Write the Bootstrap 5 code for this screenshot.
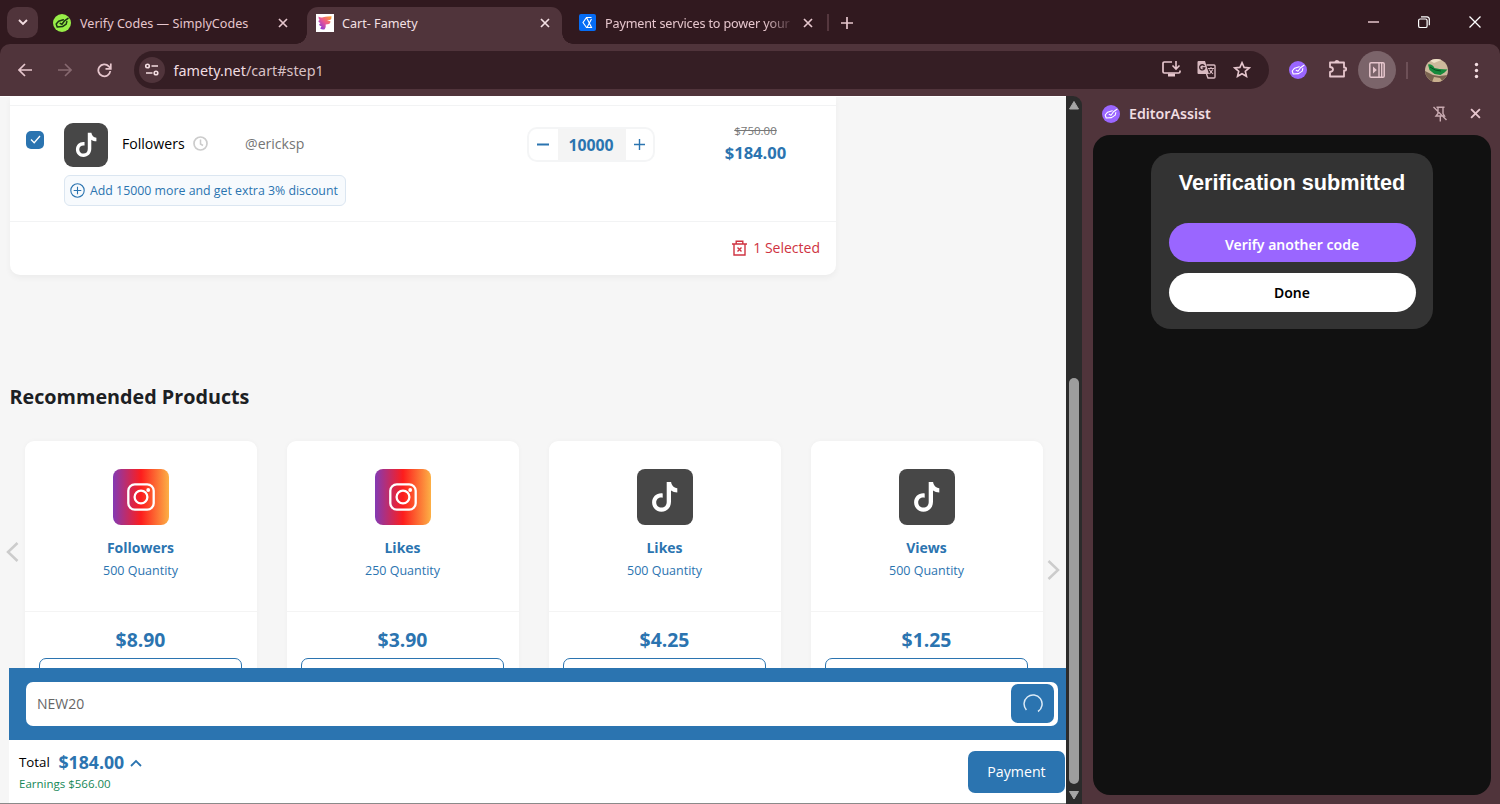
<!DOCTYPE html>
<html lang="en">
<head>
<meta charset="utf-8">
<meta name="viewport" content="width=device-width, initial-scale=1">
<title>Cart- Famety</title>
<link href="https://cdn.jsdelivr.net/npm/bootstrap@5.3.0/dist/css/bootstrap.min.css" rel="stylesheet">
<style>
:root{--strip:#31191f;--bar:#50343b;--pill:#351e24;--ink:#e6c6cd;--blue:#2b74b0;--page:#f6f6f6;}
html,body{height:100%;overflow:hidden}
body{background:var(--bar);font-family:"Open Sans","Noto Sans",sans-serif;font-size:14px;color:#111}
svg{display:block;flex:none}
.t{white-space:nowrap;display:block;flex:none}
.window{width:1500px;height:804px}
.strip{height:44px;background:var(--strip);color:var(--ink);font-family:"Noto Sans","Open Sans",sans-serif;font-size:12.6px}
.chevbox{width:31px;height:31px;border-radius:10px;background:var(--bar);margin:7px 0 0 7px}
.tab1{width:269px;padding:0 19px 0 15px}
.tab2{width:255px;height:37px;margin-top:7px;padding:0 12px 6px 9px;background:var(--bar);border-radius:11px 11px 0 0;color:#f3e0e4;position:relative}
.tab2::before,.tab2::after{content:"";position:absolute;bottom:0;width:11px;height:11px}
.tab2::before{left:-11px;background:radial-gradient(circle at 0 0,transparent 10.5px,var(--bar) 11px)}
.tab2::after{right:-11px;background:radial-gradient(circle at 100% 0,transparent 10.5px,var(--bar) 11px)}
.tab3{width:256px;padding:0 5px 0 17px}
.fade-end{width:187px;letter-spacing:-.15px;-webkit-mask-image:linear-gradient(90deg,#000 160px,transparent 190px);mask-image:linear-gradient(90deg,#000 160px,transparent 190px)}
.tabtxt{height:30px;line-height:30px;margin-top:1px}
.vline{width:2px;height:17px;background:#55373e}
.toolbar{height:52px;background:var(--strip)}
.toolbar-in{height:52px;background:var(--bar);border-radius:10px 10px 0 0;color:var(--ink)}
.omni{width:1135px;height:38px;border-radius:19px;background:var(--pill);padding:0 18px 0 5px;margin-top:-1px}
.site{width:26px;height:26px;border-radius:50%;background:var(--bar)}
.url{font-size:14.35px;color:#f0dde1;font-family:"Noto Sans","Open Sans",sans-serif}
.panelbtn{width:38px;height:38px;border-radius:50%;background:#7b646a}
.site-page{width:1066px;height:708px;background:var(--page);border-top:1px solid #fff;border-bottom:1px solid #8a8a8a}
.cart{width:826px;height:178px;margin-left:10px;background:#fff;border-radius:0 0 10px 10px;box-shadow:0 3px 6px rgba(0,0,0,.045)}
.cart-top{height:9px;border-bottom:1px solid #f2f3f4}
.cart-item{height:116px;border-bottom:1px solid #f2f3f4}
.cart-item>*{flex:none}
.check{width:18px;height:18px;border-radius:5px;background:var(--blue);margin:24.5px 0 0 16px}
.tk{background:#474747}
.tk44{width:44px;height:44px;border-radius:9px}
.offer{width:282px;height:31px;border:1px solid #dbe6f1;border-radius:6px;background:#f7fafd;color:var(--blue);font-size:12.35px;padding-left:5px;margin-top:8px}
.qty{width:128px;height:35px;border:2px solid #f4f5f6;border-radius:10px;color:var(--blue);overflow:hidden}
.qtynum{width:68px;background:#f4f4f4;font-weight:700;font-size:15.8px;line-height:32px;text-align:center;padding-right:2px}
.blue{color:var(--blue)}
.del{color:#cf3341}
.heading{height:28px;line-height:28px;font-size:19.75px;font-weight:700;color:#1c2023;margin:108px 0 30px 9.5px}
.prods{display:grid;grid-template-columns:repeat(4,232px);column-gap:30px}
.prod{height:240px;background:#fff;border-radius:9px;box-shadow:0 0 5px rgba(0,0,0,.03);color:var(--blue);text-align:center}
.prod-top{height:171px;padding-top:28px;border-bottom:1px solid #f4f4f4}
.pic{width:56px;height:56px;border-radius:8px}
.ig{background:linear-gradient(90deg,#833ab4,#fd1d1d 50%,#fcb045)}
.pname{font-weight:700;font-size:14px;line-height:20px;margin-top:13px}
.pqty{font-size:12.5px;line-height:18px;margin-top:4px}
.price{font-weight:700;font-size:19.4px;line-height:26px;padding-top:15px;height:46px}
.buy{height:38px;margin:0 14.5px;border:1px solid var(--blue);border-radius:7px}
.coupon{height:72px;background:var(--blue);padding:14px 8px 14px 16px}
.coupon-in{height:44px;background:#fff;border-radius:7px;padding:0 4px 1px 11px;color:#666;font-size:14px}
.spin{width:43px;height:39px;border-radius:7px;background:var(--blue)}
.totals{height:63px;background:#fff;padding-left:10px}
.paybtn{width:97px;height:42px;border-radius:7px;background:var(--blue);color:#fff;font-size:14.2px;line-height:42px;text-align:center;margin:11px 1px 0 0}
.sbar{width:16px;height:708px;background:#2b2b2b;border-radius:0 9px 0 0}
.thumb{width:10px;height:406px;border-radius:5px;background:#9d9d9d}
.side{width:418px;height:708px;padding:0 9px 0 11px}
.side-head{height:39px;color:var(--ink);padding:0 10px 4px 9px}
.side-title{font-family:"Noto Sans","Open Sans",sans-serif;font-weight:600;font-size:14.2px;color:#f0dde1}
.side-body{height:660px;border-radius:17px;background:#111;padding-top:18px}
.verify{width:282px;height:176px;border-radius:20px;background:#333;padding:16px 17.5px 0}
.verify-title{font-family:"Liberation Sans",Arial,sans-serif;font-weight:700;font-size:21.7px;line-height:28px;color:#fff;height:54px}
.vbtn{height:39px;border-radius:20px;line-height:41px;text-align:center;font-family:"Noto Sans","Open Sans",sans-serif;font-weight:600;font-size:14px}
</style>
</head>
<body>
<svg width="0" height="0" class="position-absolute">
<defs>
<symbol id="x" viewBox="0 0 10 10"><path d="M1 1l8 8M9 1L1 9" stroke="currentColor" stroke-width="1.7" fill="none"/></symbol>
<symbol id="tiktok" viewBox="0 0 26 32"><path d="M15.2 1h4.400c.4 3.300 2.700 5.800 6.200 6.200v4.300c-2.400 0-4.500-.7-6.300-1.900v11.100c0 6-4.200 10-9.600 10-5.300 0-9.300-4.200-9.300-9.200 0-6 4.900-9.900 10.600-9.100v4.300c-3.400-.8-6.500 1.400-6.500 4.700 0 3.100 2.400 5.200 5.200 5.200 3.100 0 5.300-2.200 5.300-5.700z" fill="#fff"/></symbol>
<symbol id="insta" viewBox="0 0 28 28"><rect x="1.300" y="1.300" width="25.400" height="25.400" rx="6.500" fill="none" stroke="#fff" stroke-width="2.300"/><circle cx="14" cy="14" r="6.400" fill="none" stroke="#fff" stroke-width="2.300"/><circle cx="21.200" cy="7" r="1.900" fill="#fff"/></symbol>
<symbol id="tag" viewBox="0 0 18 18"><g fill="none" stroke="currentColor" stroke-linejoin="round" stroke-linecap="round"><path d="M10.300 5.800L5.600 7.200 3.200 10l1 3 5.300-.4 3.700-2.500.6-2.500"/><path d="M7.200 9.300l1.800 1 2.500-3.500L15 4.300"/></g></symbol>
</defs>
</svg>

<div class="window d-flex flex-column">
  <!-- tab strip -->
  <header class="strip d-flex">
    <div class="chevbox d-flex align-items-center justify-content-center"><svg width="10" height="7" viewBox="0 0 10 7"><path d="M1 1l4 4 4-4" fill="none" stroke="#f3dde1" stroke-width="1.900"/></svg></div>
    <div class="tab1 d-flex align-items-start pt-2">
      <svg style="margin-top:6px" width="18" height="18"><circle cx="9" cy="9" r="9" fill="#98ee48"/><use href="#tag" color="#1c3613" stroke-width="1.500"/></svg>
      <span class="t tabtxt" style="margin-left:9px">Verify Codes — SimplyCodes</span>
      <svg class="ms-auto" style="margin-top:10px" width="10" height="10"><use href="#x"/></svg>
    </div>
    <div class="tab2 d-flex align-items-center">
      <svg width="18" height="18" viewBox="0 0 18 18"><defs><linearGradient id="fg" x1="0" y1="1" x2="1" y2="0"><stop offset="0" stop-color="#6c35ef"/><stop offset=".5" stop-color="#e95595"/><stop offset="1" stop-color="#ffa126"/></linearGradient></defs><path fill="#fff" d="M0 0h18v18H0z"/><path d="M2.500 2.500q2 1.500 4.500.8t5-.8l3.500-.2q.3 3-1.500 3.800l-3 .5 3.500.6q0 2-1.500 2.800l-3.300.5q.5 2.500-1 4.700-2.500.8-4.500-.8l1.300-2.200q-2 0-2.500-1.700l1.500-1.500Q2.500 8.500 2.300 7l1.400-1Q2.300 4.500 2.500 2.500z" fill="url(#fg)"/></svg>
      <span class="t" style="margin:2px 0 0 8px;line-height:22px">Cart- Famety</span>
      <svg class="ms-auto" width="10" height="10"><use href="#x"/></svg>
    </div>
    <div class="tab3 d-flex align-items-start pt-2">
      <svg style="margin-top:6px" width="17" height="17" viewBox="0 0 17 17"><rect width="17" height="17" rx="2" fill="#056cf5"/><path d="M12.500 3.500H7.500L4 8.500l3.500 5M7.500 3.500l5 10H8L12.500 5" fill="none" stroke="#fff" stroke-width="1.100"/></svg>
      <span class="t tabtxt fade-end" style="margin-left:9px">Payment services to power your</span>
      <svg class="ms-auto" style="margin-top:10px" width="10" height="10"><use href="#x"/></svg>
    </div>
    <i class="vline" style="margin:14px 0 0 9px"></i>
    <svg style="margin:17px 0 0 12px" width="12" height="12"><path d="M6 0v12M0 6h12" stroke="#e6c6cd" stroke-width="1.700"/></svg>
    <div class="ms-auto d-flex text-white" style="padding:16px 19px 0 0;gap:39px">
      <svg width="12" height="12"><path d="M1 6h11" stroke="#e6c6cd" stroke-width="1.500"/></svg>
      <svg width="12" height="13"><g fill="none" stroke="#fff" stroke-width="1.200"><rect x=".6" y="3" width="8.500" height="8.500" rx="1.600"/><path d="M3 .8h6q2.300.2 2.300 2.400v6"/></g></svg>
      <svg width="12" height="12" viewBox="0 0 12 12"><path d="M.5.500l11 11M11.500.500l-11 11" stroke="#fff" stroke-width="1.300"/></svg>
    </div>
  </header>

  <!-- navigation toolbar -->
  <nav class="toolbar"><div class="toolbar-in d-flex align-items-center">
    <svg style="margin-left:18px" width="14" height="14" viewBox="0 0 14 14"><path d="M14 7H1.500M7 1L1 7l6 6" fill="none" stroke="currentColor" stroke-width="1.700"/></svg>
    <svg style="margin-left:26px" width="14" height="14" viewBox="0 0 14 14"><path d="M0 7h12.500M7 1l6 6-6 6" fill="none" stroke="#876970" stroke-width="1.600"/></svg>
    <svg style="margin-left:25px" width="15" height="15" viewBox="0 0 15 15"><path d="M13.300 8A6 6 0 1 1 11.800 3.300L13.300 5" fill="none" stroke="currentColor" stroke-width="1.800"/><path d="M13.800.5v5.300H8.500" fill="none" stroke="currentColor" stroke-width="1.700"/></svg>
    <div class="omni d-flex align-items-center" style="margin-left:22px">
      <div class="site d-flex align-items-center justify-content-center"><svg width="14" height="13" viewBox="0 0 14 13"><g fill="none" stroke="#f3dde1" stroke-width="1.600"><circle cx="2.500" cy="3" r="1.800"/><path d="M6.500 3H13M1 10h6.500"/><circle cx="11" cy="10" r="1.800"/></g></svg></div>
      <span class="t url" style="margin-left:8.500px;padding-top:2px">famety.net<span style="color:#d9c1c6">/cart#step1</span></span>
      <svg class="ms-auto" width="19" height="17" viewBox="0 0 19 17"><path d="M10 1H2.300Q1 1 1 2.300v8.400Q1 12 2.300 12h14.400q1.300 0 1.300-1.300V9.500" fill="none" stroke="currentColor" stroke-width="1.700"/><path d="M6 12.500h7v3H6z" fill="currentColor"/><path d="M14 0v8M10.500 4.500L14 8l3.500-3.500" fill="none" stroke="currentColor" stroke-width="1.600"/></svg>
      <svg style="margin-left:16px" width="19" height="19" viewBox="0 0 19 19"><path d="M1.500 1h6.500l4 13H1.500Q.5 14 .5 13V2q0-1 1-1z" fill="#d8b9c0"/><path d="M9.500 5H17q1 0 1 1v11q0 1-1 1h-6l-1.500-4" fill="none" stroke="#d8b9c0" stroke-width="1.400"/><path d="M7.500 6A2.600 2.600 0 1 0 7.800 8H5.500" fill="none" stroke="#351e24" stroke-width="1.300"/><path d="M11 8.500h6M14 7v1.500M12 9.500l4 4.500M15.800 9.500L12.500 14" stroke="#d8b9c0" stroke-width="1.100" fill="none"/></svg>
      <svg style="margin-left:17px" width="18" height="17" viewBox="0 0 18 17"><path d="M9 1.700l2.100 4.700 5.100.5-3.900 3.400 1.200 5L9 12.700l-4.500 2.600 1.200-5-3.900-3.400 5.100-.5z" fill="none" stroke="currentColor" stroke-width="1.600"/></svg>
    </div>
    <svg style="margin-left:20px" width="18" height="18"><circle cx="9" cy="9" r="9" fill="#9a66ff"/><use href="#tag" color="#fff" stroke-width="1.100"/></svg>
    <svg style="margin-left:21px;margin-top:-3px" width="19" height="19" viewBox="0 0 19 19"><path d="M2 3.500h14V8.500h.7a1.500 1.500 0 0 1 0 3H16v6H2v-4.500q3-.3 3-2.500T2 8z" fill="none" stroke="currentColor" stroke-width="1.800" stroke-linejoin="round"/><path d="M6.500 3.500a2.500 2.500 0 0 1 5 0z" fill="currentColor"/></svg>
    <div class="panelbtn d-flex align-items-center justify-content-center" style="margin-left:11px"><svg width="16" height="16" viewBox="0 0 16 16"><rect x=".8" y=".8" width="14.400" height="14.400" rx="1.300" fill="none" stroke="currentColor" stroke-width="1.500"/><path d="M10 1v14M12.700 1v14" stroke="currentColor" stroke-width="1.400"/><path d="M4 4.500L7.800 8 4 11.500z" fill="currentColor"/></svg></div>
    <i class="vline" style="margin-left:10px;background:#6d5057"></i>
    <svg style="margin-left:17px" width="23" height="23" viewBox="0 0 23 23"><defs><clipPath id="av"><circle cx="11.500" cy="11.500" r="11.500"/></clipPath></defs><g clip-path="url(#av)"><path fill="#cdb99c" d="M0 0h23v23H0z"/><path d="M0 12l8 4 6 1 9-1v7H0z" fill="#7a6350"/><path d="M2 0l7 4 10-4z" fill="#efe0c7"/><path d="M9 18l6 1 3 4H7z" fill="#c9b08f"/><path d="M3 5.500q4-1 6.500 3.500l5 1 8 .5-3 3-4 2.500-6-1-5-4z" fill="#168a3c"/><path d="M5 8q5 4 11 4" stroke="#0a4f22" stroke-width="1" fill="none"/></g></svg>
    <svg style="margin-left:26px" width="5" height="17"><g fill="#f3dde1"><circle cx="2.500" cy="2.500" r="1.700"/><circle cx="2.500" cy="8.500" r="1.700"/><circle cx="2.500" cy="14.500" r="1.700"/></g></svg>
  </div></nav>

  <div class="d-flex flex-grow-1">
    <!-- shop page -->
    <div class="site-page d-flex flex-column">
      <main class="flex-grow-1 overflow-hidden" style="height:571px">
        <section class="cart">
          <div class="cart-top"></div>
          <div class="cart-item d-flex">
            <div class="check d-flex align-items-center justify-content-center"><svg width="11" height="9"><path d="M1 4.500l3.200 3.200L10 1" fill="none" stroke="#fff" stroke-width="1.300"/></svg></div>
            <div style="margin:17px 0 0 19.500px;width:463.500px">
              <div class="d-flex align-items-center">
                <div class="tk tk44 d-flex align-items-center justify-content-center"><svg width="22" height="26"><use href="#tiktok"/></svg></div>
                <span class="t text-black" style="margin:-2px 0 0 14.500px;width:71px;font-size:14.100px">Followers</span>
                <svg style="margin-top:-3px" width="15" height="15"><circle cx="7.500" cy="7.500" r="6.500" fill="none" stroke="#ccc" stroke-width="1.700"/><path d="M7.500 3.500v4.500l2.500 1.500" fill="none" stroke="#ccc" stroke-width="1.500"/></svg>
                <span class="t" style="margin:-2px 0 0 37px;font-size:14.100px;color:#757575">@ericksp</span>
              </div>
              <div class="offer d-flex align-items-center"><svg width="15" height="15"><g fill="none" stroke="#2b74b0" stroke-width="1.100"><circle cx="7.500" cy="7.500" r="6.700"/><path d="M7.500 3.700v7.600M3.700 7.500h7.600"/></g></svg><span class="t" style="margin:1px 0 0 5.500px">Add 15000 more and get extra 3% discount</span></div>
            </div>
            <div class="qty d-flex" style="margin-top:21px">
              <svg width="29" height="31"><path d="M8 15.500h12" stroke="#2b74b0" stroke-width="1.900"/></svg>
              <div class="qtynum">10000</div>
              <svg width="27" height="31"><path d="M8 15.500h11M13.500 10v11" stroke="#2b74b0" stroke-width="1.400"/></svg>
            </div>
            <div class="text-center" style="width:181px;padding:17px 0 0 20px"><div class="text-decoration-line-through" style="font-size:11.500px;line-height:16px;color:#777">$750.00</div><div class="fw-bold blue" style="font-size:16.600px;line-height:22px;margin-top:3px">$184.00</div></div>
          </div>
          <div class="d-flex justify-content-end align-items-center del" style="height:52px;padding-right:16px"><svg width="15" height="16" viewBox="0 0 15 16"><g fill="none" stroke="currentColor" stroke-width="1.400"><path d="M0 4h15M4.200 4V1.200h6.600V4M2 4v11h11V4"/><path d="M5.500 7.500l4 4M9.500 7.500l-4 4"/></g></svg><span class="t" style="margin:-1px 0 0 6px">1 Selected</span></div>
        </section>

        <h2 class="heading"><span class="t">Recommended Products</span></h2>
        <div class="d-flex">
          <div style="width:24.500px;padding:101px 0 0 6px"><svg width="13" height="20"><path d="M11.500 1L2 10l9.500 9" fill="none" stroke="#ccc" stroke-width="2.500"/></svg></div>
          <div class="prods">
            <article class="prod"><div class="prod-top"><div class="pic ig mx-auto d-flex align-items-center justify-content-center"><svg width="28" height="28"><use href="#insta"/></svg></div><div class="pname">Followers</div><div class="pqty">500 Quantity</div></div><div class="price">$8.90</div><div class="buy"></div></article>
            <article class="prod"><div class="prod-top"><div class="pic ig mx-auto d-flex align-items-center justify-content-center"><svg width="28" height="28"><use href="#insta"/></svg></div><div class="pname">Likes</div><div class="pqty">250 Quantity</div></div><div class="price">$3.90</div><div class="buy"></div></article>
            <article class="prod"><div class="prod-top"><div class="pic tk mx-auto d-flex align-items-center justify-content-center"><svg width="27" height="32"><use href="#tiktok"/></svg></div><div class="pname">Likes</div><div class="pqty">500 Quantity</div></div><div class="price">$4.25</div><div class="buy"></div></article>
            <article class="prod"><div class="prod-top"><div class="pic tk mx-auto d-flex align-items-center justify-content-center"><svg width="27" height="32"><use href="#tiktok"/></svg></div><div class="pname">Views</div><div class="pqty">500 Quantity</div></div><div class="price">$1.25</div><div class="buy"></div></article>
          </div>
          <div style="padding:119px 0 0 4.500px"><svg width="13" height="20"><path d="M1.500 1l9.500 9-9.500 9" fill="none" stroke="#ccc" stroke-width="2.500"/></svg></div>
        </div>
      </main>
      <footer style="margin-left:9px">
        <div class="coupon"><div class="coupon-in d-flex align-items-center" style="margin-left:1px"><span class="t" style="margin-top:-1px">NEW20</span><div class="spin ms-auto d-flex align-items-center justify-content-center"><svg width="20" height="20"><path d="M3.400 16A9 9 0 1 1 15 17.500" fill="none" stroke="#dcebf7" stroke-width="1.500"/></svg></div></div></div>
        <div class="totals d-flex justify-content-between">
          <div>
            <div class="d-flex align-items-center" style="height:25px;margin-top:10px"><span class="t text-black" style="font-size:13.300px;width:39.500px">Total</span><span class="t fw-bold blue" style="font-size:17.700px">$184.00</span><svg style="margin-left:6px" width="12" height="8"><path d="M1 7l5-5 5 5" fill="none" stroke="#2b74b0" stroke-width="1.800"/></svg></div>
            <div class="t" style="font-size:11.500px;line-height:16px;color:#168757;margin-top:1px">Earnings $566.00</div>
          </div>
          <div class="paybtn">Payment</div>
        </div>
      </footer>
    </div>
    <!-- scrollbar -->
    <div class="sbar d-flex flex-column align-items-center">
      <svg style="margin-top:5px" width="10" height="9"><path d="M5 .5L9.500 8h-9z" fill="#a5a5a5" stroke="#a5a5a5" stroke-linejoin="round"/></svg>
      <div class="thumb" style="margin-top:268px"></div>
      <svg style="margin-top:7px" width="10" height="9"><path d="M5 8L.5.5h9z" fill="#a5a5a5" stroke="#a5a5a5" stroke-linejoin="round"/></svg>
    </div>
    <!-- extension side panel -->
    <aside class="side">
      <div class="side-head d-flex align-items-center">
        <svg width="18" height="18"><circle cx="9" cy="9" r="9" fill="#9a66ff"/><use href="#tag" color="#fff" stroke-width="1.100"/></svg>
        <span class="t side-title" style="margin-left:9px;padding-top:1px">EditorAssist</span>
        <svg class="ms-auto" width="14" height="16" viewBox="0 0 14 16"><path d="M3.500 1.200h8M5 1.500v6L3 10h8.500L10 7.500v-6M7.300 10v5.500M.5 1l13 13" fill="none" stroke="#c9aab1" stroke-width="1.400"/></svg>
        <svg style="margin-left:23px" width="11" height="11"><use href="#x"/></svg>
      </div>
      <div class="side-body">
        <div class="verify mx-auto">
          <div class="verify-title d-flex justify-content-center"><span class="t">Verification submitted</span></div>
          <div class="vbtn text-white" style="background:#9a66ff;line-height:43px">Verify another code</div>
          <div class="vbtn text-black bg-white" style="margin-top:11px;line-height:40px">Done</div>
        </div>
      </div>
    </aside>
  </div>
</div>
<script src="https://cdn.jsdelivr.net/npm/bootstrap@5.3.0/dist/js/bootstrap.bundle.min.js"></script>
</body>
</html>
